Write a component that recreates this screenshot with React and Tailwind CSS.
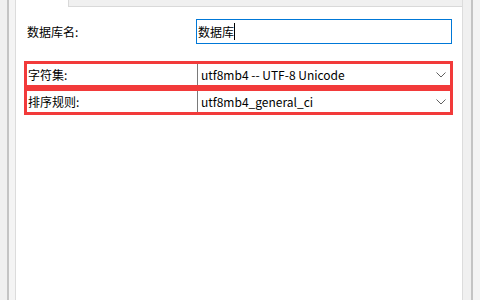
import React from 'react';

const font = { fontFamily: '"Noto Sans CJK SC", "Noto Sans", sans-serif' };

const Chevron = () => (
  <svg width="10" height="6" viewBox="0 0 10 6" className="shrink-0">
    <path d="M0.5 0.5 L5 5 L9.5 0.5" fill="none" stroke="#606060" strokeWidth="1" />
  </svg>
);

const SelectRow = ({ label, value }) => (
  <div className="flex h-[27px] border-[3px] border-[#f23a3a] bg-white">
    <div className="w-[170px] flex items-center pl-[1px] text-[12px] text-black">{label}</div>
    <div className="flex-1 flex items-center justify-between border-l border-[#7a7a7a] pl-[3px] pr-[4px]">
      <span className="text-[12px] text-black">{value}</span>
      <Chevron />
    </div>
  </div>
);

export default function App() {
  return (
    <div className="w-[480px] h-[300px] bg-[#f0f0f0] flex overflow-hidden" style={font}>
      {/* left window edge */}
      <div className="w-[7px]" />
      <div className="w-[2px] bg-[#c4c4c4]" />
      <div className="w-[6px] bg-[#f4f4f4]" />

      {/* dialog panel */}
      <div className="w-[448px] flex flex-col bg-white border-l border-r border-[#dcdcdc]">
        {/* tab strip remnant */}
        <div className="h-[7px] flex">
          <div className="w-[52px] bg-white" />
          <div className="flex-1 bg-[#f0f0f0] border-l border-b border-[#d9d9d9]" />
        </div>

        <div className="flex items-center h-[25px] mt-[12px]">
          <div className="w-[180px] pl-[11px] text-[12px] text-black">数据库名:</div>
          <div className="w-[256px] h-[25px] border border-[#0078d7] flex items-center pl-[1px] text-[12px] text-black">
            <span>数据库</span>
            <span className="w-px h-[17px] bg-black" />
          </div>
        </div>

        <div className="mt-[17px] ml-[8px] w-[429px] flex flex-col">
          <SelectRow label="字符集:" value="utf8mb4 -- UTF-8 Unicode" />
          <SelectRow label="排序规则:" value="utf8mb4_general_ci" />
        </div>
      </div>

      {/* right window edge */}
      <div className="w-[8px]" />
      <div className="w-[2px] bg-[#c4c4c4]" />
      <div className="flex-1 bg-[#f4f4f4]" />
    </div>
  );
}
